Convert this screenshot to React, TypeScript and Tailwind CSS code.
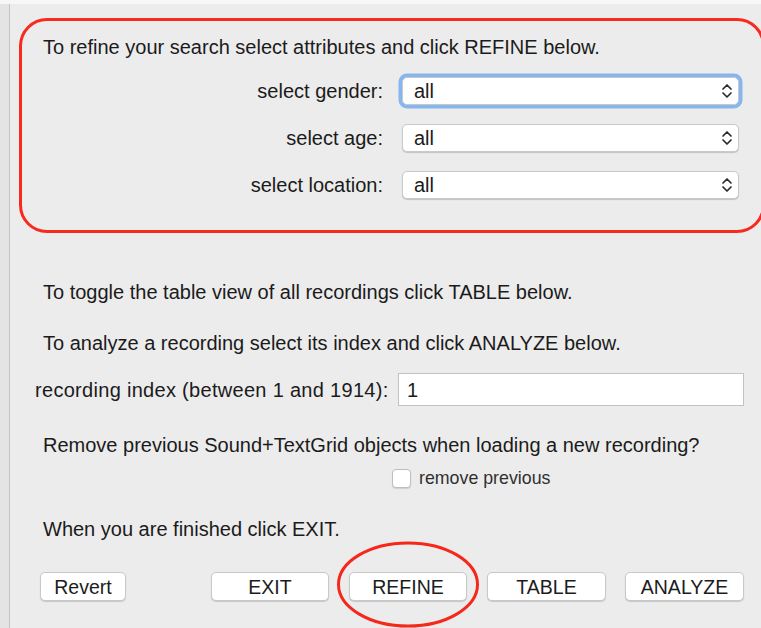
import React from "react";

function UpDown() {
  return (
    <svg width="12" height="18" viewBox="0 0 12 18" fill="none">
      <path d="M2 7 L6 3 L10 7" stroke="#2a2a2a" strokeWidth="1.7" strokeLinecap="round" strokeLinejoin="round" />
      <path d="M2 11 L6 15 L10 11" stroke="#2a2a2a" strokeWidth="1.7" strokeLinecap="round" strokeLinejoin="round" />
    </svg>
  );
}

function SelectBox({ value, focused }: { value: string; focused?: boolean }) {
  return (
    <div
      className={
        "ml-[19px] w-[337px] h-[28px] bg-white rounded-[5px] border border-[#c9c9c9] flex items-center justify-between pl-[11px] pr-[5px] shadow-[0_1px_1px_rgba(0,0,0,0.18)] " +
        (focused ? "ring-[3.5px] ring-[#86b6ee]" : "")
      }
    >
      <span className="text-[20px] leading-[24px] text-[#1b1b1b]">{value}</span>
      <UpDown />
    </div>
  );
}

function Btn({ label, className }: { label: string; className: string }) {
  return (
    <button
      className={
        "h-[29px] bg-white rounded-[5px] border border-[#c8c8c8] shadow-[0_1px_1px_rgba(0,0,0,0.16)] text-[19.5px] leading-[22px] text-[#1c1c1c] flex items-center justify-center " +
        className
      }
    >
      {label}
    </button>
  );
}

export default function App() {
  const rows = [
    { label: "select gender:", focused: true },
    { label: "select age:", focused: false },
    { label: "select location:", focused: false },
  ];
  return (
    <div className="w-[761px] h-[628px] overflow-hidden relative bg-[#ececec] flex flex-col font-['Liberation_Sans',Arial,sans-serif] text-[#1b1b1b] text-[20px] leading-[24px]">
      <div className="h-[4px] shrink-0 bg-[#f7f7f7]" />
      <div className="flex flex-1 min-h-0">
        <div className="w-[10px] shrink-0 bg-[#e4e4e4] border-r border-[#c4c4c4]" />
        <div className="flex-1 min-w-0">
          {/* attribute filter group */}
          <div className="ml-[9px] mt-[14px] w-[746px] h-[215px] border-[3px] border-[#f8291d] rounded-[28px] pl-[21px] pt-[14px]">
            <p className="whitespace-nowrap">To refine your search select attributes and click REFINE below.</p>
            <div className="mt-[18px] flex flex-col gap-[19px]">
              {rows.map((r) => (
                <div key={r.label} className="flex items-center h-[28px]">
                  <span className="w-[340px] text-right whitespace-nowrap">{r.label}</span>
                  <SelectBox value="all" focused={r.focused} />
                </div>
              ))}
            </div>
          </div>

          <div className="pl-[33px]">
            <p className="mt-[47px] whitespace-nowrap">To toggle the table view of all recordings click TABLE below.</p>
            <p className="mt-[27px] whitespace-nowrap">To analyze a recording select its index and click ANALYZE below.</p>
            <div className="mt-[18px] -ml-[8px] flex items-center h-[33px]">
              <span className="w-[348px] text-right whitespace-nowrap tracking-[0.015em]">recording index (between 1 and 1914):</span>
              <div className="ml-[15px] w-[346px] h-[33px] bg-white border border-[#c2c2c2] flex items-center pl-[8px]">
                <span>1</span>
              </div>
            </div>
            <p className="mt-[27px] whitespace-nowrap">Remove previous Sound+TextGrid objects when loading a new recording?</p>
            <div className="mt-[9px] h-[24px] flex items-center ml-[349px]">
              <div className="w-[19px] h-[19px] bg-white rounded-[4px] border border-[#bdbdbd] shadow-[0_1px_1px_rgba(0,0,0,0.12)]" />
              <span className="ml-[8px] text-[17.8px] text-[#303030] whitespace-nowrap">remove previous</span>
            </div>
            <p className="mt-[27px] whitespace-nowrap">When you are finished click EXIT.</p>
            <div className="mt-[31px] -ml-[3px] flex items-center">
              <Btn label="Revert" className="w-[86px]" />
              <Btn label="EXIT" className="ml-[85px] w-[118px]" />
              <Btn label="REFINE" className="ml-[20px] w-[118px]" />
              <Btn label="TABLE" className="ml-[20px] w-[119px]" />
              <Btn label="ANALYZE" className="ml-[19px] w-[119px]" />
            </div>
          </div>
        </div>
      </div>

      {/* marker ring around REFINE */}
      <svg className="absolute left-[336px] top-[541px] pointer-events-none" width="145" height="88" viewBox="0 0 145 88" fill="none">
        <ellipse cx="72" cy="43.5" rx="69.5" ry="41.5" stroke="#f5281c" strokeWidth="3" />
      </svg>
    </div>
  );
}
